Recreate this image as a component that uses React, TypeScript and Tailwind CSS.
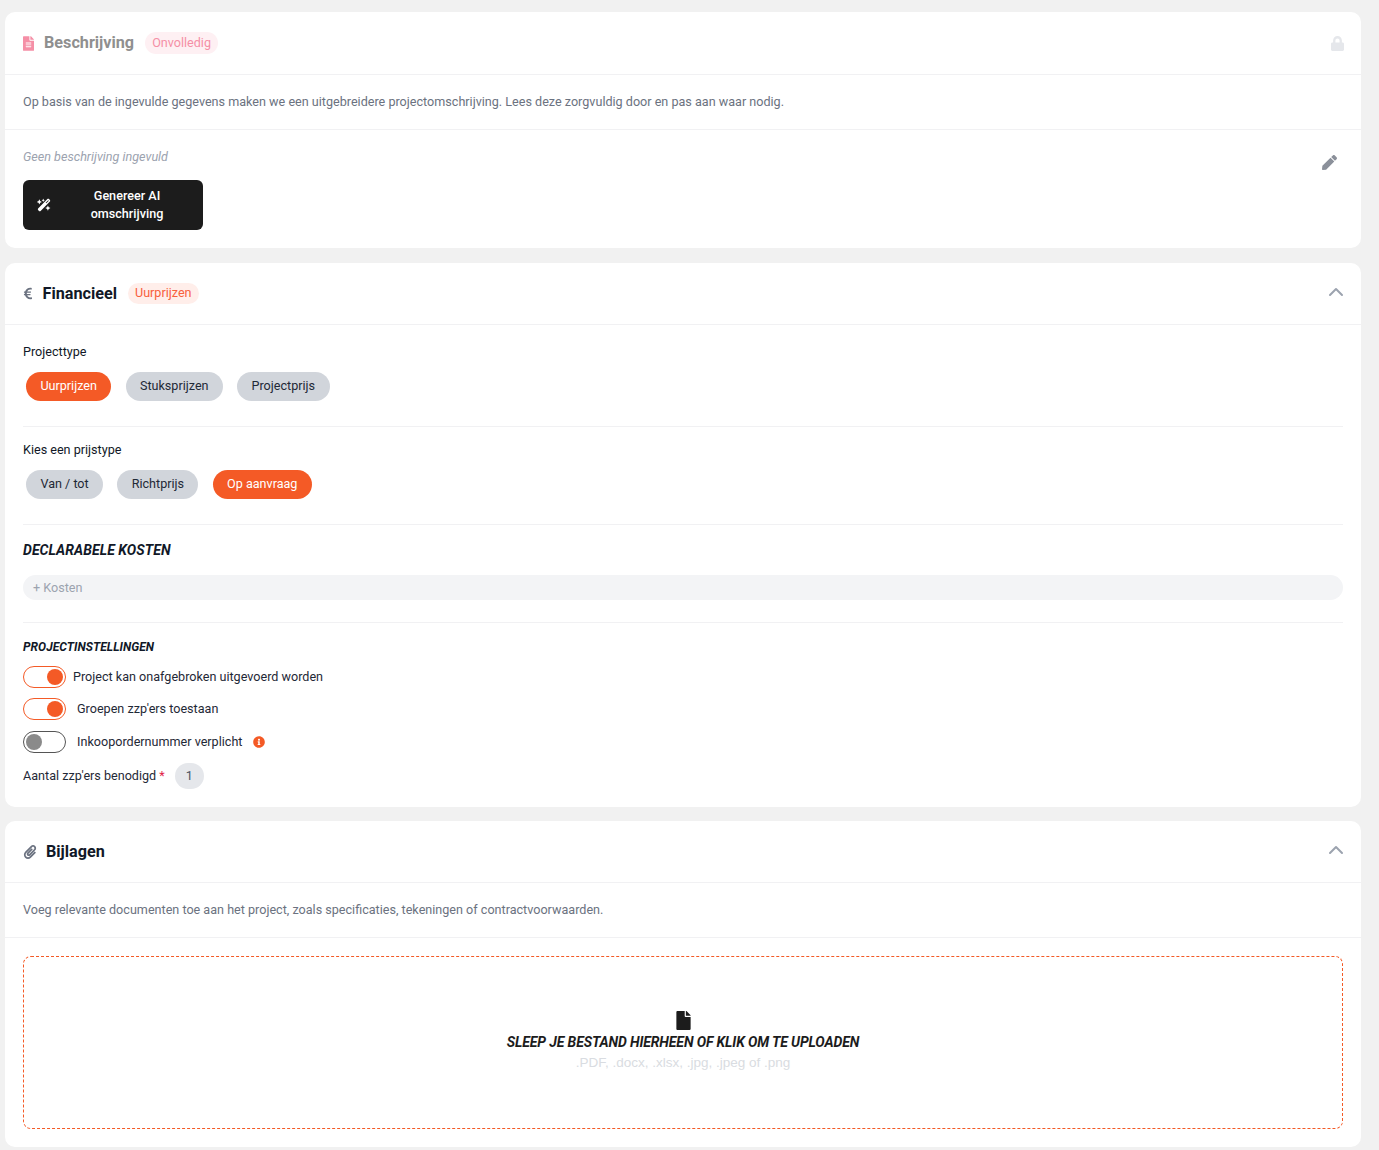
import type { ReactNode } from "react";
import {
  FaEuroSign,
  FaFile,
  FaFileAlt,
  FaInfoCircle,
  FaLock,
  FaPaperclip,
  FaPen,
} from "react-icons/fa";
import { FaWandMagicSparkles } from "react-icons/fa6";
import { ChevronUp } from "lucide-react";

const Pill = ({ active, children }: { active?: boolean; children: ReactNode }) => (
  <button
    className={
      active
        ? "flex h-[29px] items-center rounded-full bg-[#f45a26] px-[14.4px] text-[12.6px] text-white"
        : "flex h-[29px] items-center rounded-full bg-[#d1d5db] px-[14.4px] text-[12.6px] text-[#1f2937]"
    }
  >
    {children}
  </button>
);

const Toggle = ({ on }: { on?: boolean }) => (
  <span
    className={
      on
        ? "flex h-[22px] w-[43px] shrink-0 items-center justify-end rounded-full border border-[#f45a26] bg-white px-[2px]"
        : "flex h-[22px] w-[43px] shrink-0 items-center justify-start rounded-full border border-[#555555] bg-white px-[2px]"
    }
  >
    <span
      className={
        on
          ? "h-4 w-4 rounded-full bg-[#f45a26]"
          : "h-4 w-4 rounded-full bg-[#8a8a8a]"
      }
    />
  </span>
);

const App = () => {
  return (
    <div className="h-[1150px] overflow-hidden bg-[#f1f1f1] pt-3 pr-[18px] pl-[5px] font-['Roboto',sans-serif] text-[12.6px] text-[#1a1a1a]">
      {/* Beschrijving */}
      <section className="h-[236px] rounded-[10px] bg-white">
        <div className="flex h-[63px] items-center border-b border-[#f1f1f3] pr-[17px] pl-[18px]">
          <FaFileAlt className="h-[15px] w-[11px] text-[#f58fa6]" />
          <h2 className="ml-[10px] text-[16.2px] font-bold text-[#8f8f8f]">Beschrijving</h2>
          <span className="ml-[11px] flex h-[22px] items-center rounded-full bg-[#fef0f3] px-[7px] text-[12.6px] text-[#f58fa6]">
            Onvolledig
          </span>
          <FaLock className="ml-auto h-[15px] w-[13px] text-[#e5e7eb]" />
        </div>
        <p className="flex h-[55px] items-center border-b border-[#f1f1f3] px-[18px] text-[#6b7280]">
          Op basis van de ingevulde gegevens maken we een uitgebreidere projectomschrijving. Lees deze zorgvuldig door en pas aan waar nodig.
        </p>
        <div className="flex justify-between pt-[19px] pr-[24px] pl-[18px]">
          <div>
            <p className="leading-[15px] text-[#9ca3af] italic">Geen beschrijving ingevuld</p>
            <button className="mt-[16px] flex h-[50px] w-[180px] items-center rounded-[6px] bg-[#1c1c1c] pl-[14px] text-white">
              <FaWandMagicSparkles className="h-[14px] w-[14px] shrink-0" />
              <span className="flex-1 text-[12.6px] leading-[18px] font-medium">
                Genereer AI
                <br />
                omschrijving
              </span>
            </button>
          </div>
          <FaPen className="mt-[6px] h-[15px] w-[15px] text-[#8b909a]" />
        </div>
      </section>

      {/* Financieel */}
      <section className="mt-[15px] h-[544px] rounded-[10px] bg-white">
        <div className="flex h-[62px] items-center border-b border-[#f1f1f3] pr-[13px] pl-[18px]">
          <FaEuroSign className="h-[13px] w-[10px] text-[#6b7280]" />
          <h2 className="ml-[9.5px] pt-[1px] text-[16.2px] font-bold text-[#111827]">Financieel</h2>
          <span className="ml-[11px] flex h-[21px] items-center rounded-full bg-[#ffeeea] px-[7px] text-[12.6px] text-[#f8603c]">
            Uurprijzen
          </span>
          <ChevronUp className="mb-[4px] ml-auto h-6 w-6 text-[#9ca3af]" />
        </div>

        <div className="px-[18px]">
          <div className="border-b border-[#f1f1f3] pt-[19px] pb-[25px]">
            <p className="leading-[16px] text-[#111827]">Projecttype</p>
            <div className="mt-[12px] flex gap-[14.2px] pl-[3px]">
              <Pill active>Uurprijzen</Pill>
              <Pill>Stuksprijzen</Pill>
              <Pill>Projectprijs</Pill>
            </div>
          </div>

          <div className="border-b border-[#f1f1f3] pt-[15px] pb-[25px]">
            <p className="leading-[16px] text-[#111827]">Kies een prijstype</p>
            <div className="mt-[12px] flex gap-[14.2px] pl-[3px]">
              <Pill>Van / tot</Pill>
              <Pill>Richtprijs</Pill>
              <Pill active>Op aanvraag</Pill>
            </div>
          </div>

          <div className="border-b border-[#f1f1f3] pt-[16px] pb-[22px]">
            <h3 className="text-sm leading-[18px] font-bold tracking-[0.07px] text-[#111827] uppercase italic">
              Declarabele kosten
            </h3>
            <div className="mt-[16px] flex h-[25px] items-center rounded-full bg-[#f3f4f6] px-[10px] pt-[1px] text-[#9ca3af]">
              + Kosten
            </div>
          </div>

          <h3 className="mt-[17px] text-xs leading-[15px] font-bold tracking-[0.05px] text-[#111827] uppercase italic">
            Projectinstellingen
          </h3>
          <div className="mt-[11px] flex items-center">
            <Toggle on />
            <span className="ml-[7px] text-[#1f2937]">Project kan onafgebroken uitgevoerd worden</span>
          </div>
          <div className="mt-[10px] flex items-center">
            <Toggle on />
            <span className="ml-[11px] text-[#1f2937]">Groepen zzp'ers toestaan</span>
          </div>
          <div className="mt-[11px] flex items-center">
            <Toggle />
            <span className="ml-[11px] text-[#1f2937]">Inkoopordernummer verplicht</span>
            <FaInfoCircle className="ml-[11px] h-[12px] w-[12px] text-[#f45a26]" />
          </div>
          <div className="mt-[10px] flex items-center">
            <span className="text-[#1f2937]">
              Aantal zzp'ers benodigd <span className="text-[#e11d48]">*</span>
            </span>
            <span className="ml-[10px] flex h-[26px] w-[29px] items-center justify-center rounded-full bg-[#e5e7eb] text-[#4b5563]">
              1
            </span>
          </div>
        </div>
      </section>

      {/* Bijlagen */}
      <section className="mt-[14px] h-[326px] rounded-[10px] bg-white">
        <div className="flex h-[62px] items-center border-b border-[#f1f1f3] pr-[13px] pl-[18px]">
          <FaPaperclip className="h-[14px] w-[14px] text-[#6b7280]" />
          <h2 className="ml-[9px] pt-[1px] text-[16.2px] font-bold text-[#111827]">Bijlagen</h2>
          <ChevronUp className="mb-[4px] ml-auto h-6 w-6 text-[#9ca3af]" />
        </div>
        <p className="flex h-[55px] items-center border-b border-[#f1f1f3] px-[18px] text-[#6b7280]">
          Voeg relevante documenten toe aan het project, zoals specificaties, tekeningen of contractvoorwaarden.
        </p>
        <div className="px-[18px] pt-[18px]">
          <div className="flex h-[173px] flex-col items-center justify-center rounded-[8px] border border-dashed border-[#f45a26] pb-[2px]">
            <FaFile className="h-[19px] w-[15px] text-[#1c1c1c]" />
            <p className="mt-[3px] text-sm leading-[18px] font-bold tracking-[-0.12px] text-[#1c1c1c] uppercase italic">
              Sleep je bestand hierheen of klik om te uploaden
            </p>
            <p className="mt-[2px] font-['Liberation_Sans',sans-serif] text-[13.5px] leading-[20px] text-[#d9dce1]">
              .PDF, .docx, .xlsx, .jpg, .jpeg of .png
            </p>
          </div>
        </div>
      </section>
    </div>
  );
};

export default App;
